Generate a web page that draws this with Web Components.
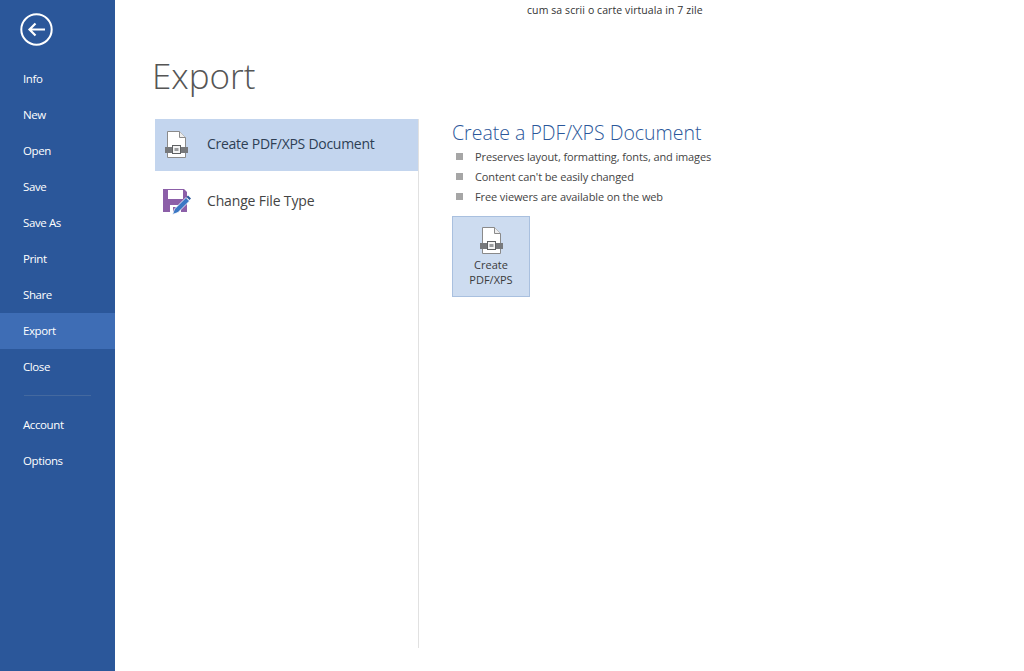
<!DOCTYPE html>
<html>
<head>
<meta charset="utf-8">
<title>Export</title>
<style>
  html, body { margin: 0; height: 100%; background: #fff; }
  body { font-family: "Open Sans", "Liberation Sans", sans-serif; overflow: hidden; }
</style>
</head>
<body>
<backstage-view></backstage-view>

<template id="doc-icon">
  <svg width="26" height="28" viewBox="0 0 26 28" fill="none">
    <path d="M4.5 .5H16.5L22.5 6.5V26.5H4.5Z" fill="#fff" stroke="#8a8a8a"/>
    <path d="M16.5 .5V6.5H22.5" fill="#eee" stroke="#8a8a8a"/>
    <rect x="2" y="16" width="23" height="6" fill="#77797c"/>
    <rect x="9.5" y="14.5" width="8" height="8" fill="#f4f4f4" stroke="#5f6163"/>
    <rect x="11.5" y="17" width="4" height="3" fill="#9a9c9e"/>
  </svg>
</template>

<script>
class NavItem extends HTMLElement {
  constructor() {
    super();
    this.attachShadow({ mode: "open" }).innerHTML = `
      <style>
        :host {
          display: flex;
          align-items: center;
          height: 36px;
          padding: 0 0 2px 23px;
          box-sizing: border-box;
          color: #fff;
          font-size: 11.5px;
          letter-spacing: -0.4px;
        }
        :host([active]) { background: #3e6db5; }
      </style>
      <slot></slot>`;
  }
}

class SideBar extends HTMLElement {
  constructor() {
    super();
    this.attachShadow({ mode: "open" }).innerHTML = `
      <style>
        :host {
          display: block;
          width: 115px;
          flex: none;
          background: #2b579a;
        }
        .back {
          display: flex;
          height: 61px;
          padding: 0 0 2px 20px;
          align-items: center;
          box-sizing: border-box;
        }
        .sep {
          height: 1px;
          margin: 10px 24px 11px 24px;
          background: #44699f;
        }
      </style>
      <div class="back">
        <svg width="33" height="33" viewBox="0 0 33 33" fill="none" stroke="#fff">
          <circle cx="16.5" cy="16.5" r="15.2" stroke-width="2"/>
          <path d="M25 16.5H10M15.5 10.5L9.5 16.5L15.5 22.5" stroke-width="2.2"/>
        </svg>
      </div>
      <nav-item>Info</nav-item>
      <nav-item>New</nav-item>
      <nav-item>Open</nav-item>
      <nav-item>Save</nav-item>
      <nav-item>Save As</nav-item>
      <nav-item>Print</nav-item>
      <nav-item>Share</nav-item>
      <nav-item active>Export</nav-item>
      <nav-item>Close</nav-item>
      <div class="sep"></div>
      <nav-item>Account</nav-item>
      <nav-item>Options</nav-item>`;
  }
}

class ExportOption extends HTMLElement {
  constructor() {
    super();
    this.attachShadow({ mode: "open" }).innerHTML = `
      <style>
        :host {
          display: flex;
          align-items: center;
          box-sizing: border-box;
          height: 62px;
          padding: 0 0 4px 8px;
          gap: 18px;
          color: #444;
          font-size: 14px;
          letter-spacing: -0.15px;
        }
        :host([selected]) {
          height: 52px;
          background: #c3d5ee;
          color: #2e3f55;
          letter-spacing: -0.27px;
        }
        .ico { width: 26px; height: 28px; flex: none; margin-top: 4px; }
      </style>
      <div class="ico"><slot name="icon"></slot></div>
      <slot></slot>`;
  }
}

class DocIcon extends HTMLElement {
  constructor() {
    super();
    const root = this.attachShadow({ mode: "open" });
    const style = document.createElement("style");
    style.textContent = ":host { display: block; width: 26px; height: 28px; } svg { display: block; }";
    root.append(style, document.getElementById("doc-icon").content.cloneNode(true));
  }
}

class DetailPane extends HTMLElement {
  constructor() {
    super();
    this.attachShadow({ mode: "open" }).innerHTML = `
      <style>
        :host {
          display: block;
          padding-left: 33px;
          color: #444;
        }
        h2 {
          margin: 0;
          height: 27px;
          line-height: 28px;
          font-size: 19.5px;
          font-weight: 300;
          color: #2b579a;
        }
        ul { list-style: none; margin: 0; padding: 0; }
        li {
          display: flex;
          align-items: center;
          height: 20px;
          font-size: 11px;
          letter-spacing: -0.11px;
          color: #444;
        }
        li::before {
          content: "";
          width: 7px;
          height: 7px;
          margin: 0 12px 0 4px;
          background: #a6a6a6;
        }
        .btn {
          box-sizing: border-box;
          display: flex;
          flex-direction: column;
          align-items: center;
          width: 78px;
          height: 81px;
          margin-top: 10px;
          padding-top: 10px;
          background: #cddcf0;
          border: 1px solid #a9c0df;
          font-size: 11px;
          line-height: 15px;
          text-align: center;
          color: #3b3b3b;
        }
        .btn span { margin-top: 2px; }
      </style>
      <h2>Create a PDF/XPS Document</h2>
      <ul>
        <li>Preserves layout, formatting, fonts, and images</li>
        <li>Content can't be easily changed</li>
        <li>Free viewers are available on the web</li>
      </ul>
      <div class="btn">
        <doc-icon></doc-icon>
        <span>Create<br>PDF/XPS</span>
      </div>`;
  }
}

class BackstageView extends HTMLElement {
  constructor() {
    super();
    this.attachShadow({ mode: "open" }).innerHTML = `
      <style>
        :host { display: flex; height: 671px; color: #444; }
        main { flex: 1; display: flex; flex-direction: column; min-width: 0; }
        .doc-title {
          height: 21px;
          line-height: 21px;
          font-size: 10.5px;
          letter-spacing: 0.08px;
          color: #333;
          padding-left: 412px;
        }
        h1 {
          margin: 0;
          height: 97px;
          line-height: 110px;
          padding-left: 37px;
          box-sizing: border-box;
          font-size: 35px;
          font-weight: 300;
          color: #555;
        }
        .cols { display: flex; padding-left: 40px; padding-top: 1px; }
        .options {
          width: 264px;
          height: 529px;
          box-sizing: border-box;
          border-right: 1px solid #e1e1e1;
        }
        svg { display: block; overflow: visible; }
      </style>
      <side-bar></side-bar>
      <main>
        <div class="doc-title">cum sa scrii o carte virtuala in 7 zile</div>
        <h1>Export</h1>
        <div class="cols">
          <div class="options">
            <export-option selected>
              <doc-icon slot="icon"></doc-icon>
              Create PDF/XPS Document
            </export-option>
            <export-option>
              <svg slot="icon" width="28" height="28" viewBox="0 0 28 28">
                <path d="M0 1H21L24 4V24H0Z" fill="#8c5fa8"/>
                <rect x="5" y="2" width="15" height="9" fill="#fff"/>
                <rect x="7" y="17" width="11" height="7" fill="#fff"/>
                <rect x="10" y="19" width="3" height="5" fill="#8c5fa8"/>
                <path d="M9.5 26.5L11.5 21L23 9.5L26.5 13L15 24.5Z" fill="#3a77c4" stroke="#fff" stroke-width=".8"/>
                <path d="M23.5 9L25 7.5L28 10.5L26.5 12Z" fill="#2b579a"/>
              </svg>
              Change File Type
            </export-option>
          </div>
          <detail-pane></detail-pane>
        </div>
      </main>`;
  }
}

customElements.define("nav-item", NavItem);
customElements.define("side-bar", SideBar);
customElements.define("doc-icon", DocIcon);
customElements.define("export-option", ExportOption);
customElements.define("detail-pane", DetailPane);
customElements.define("backstage-view", BackstageView);
</script>
</body>
</html>
